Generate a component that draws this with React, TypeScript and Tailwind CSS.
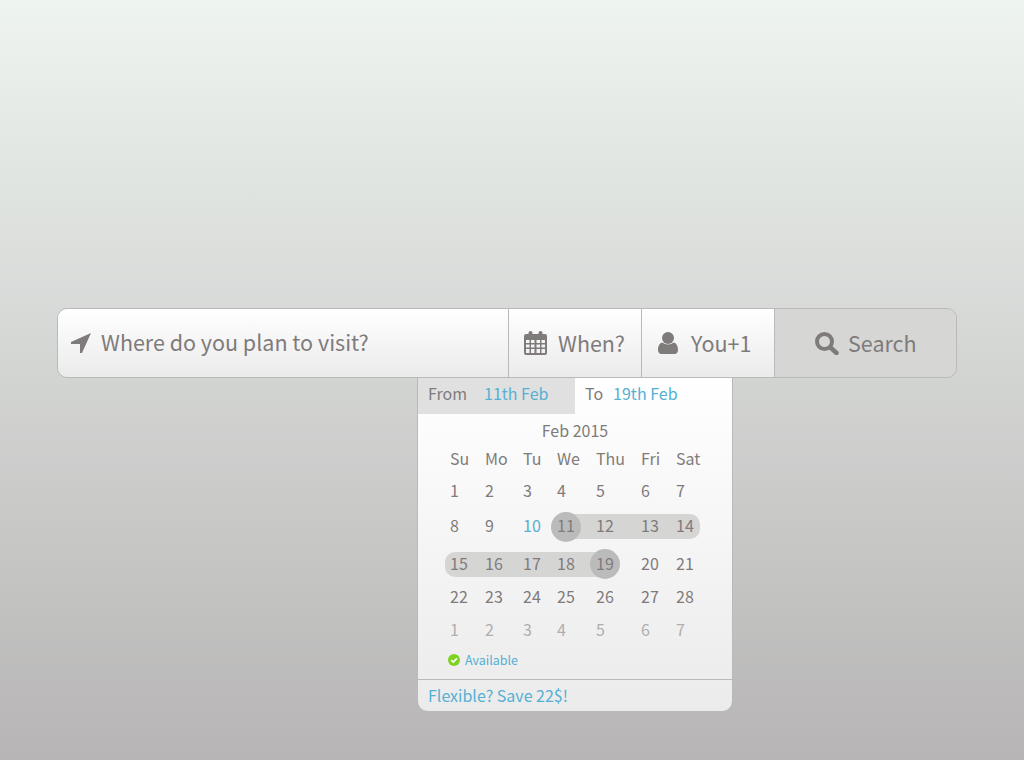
const font = "font-['Noto_Sans_CJK_SC','Noto_Sans',sans-serif]";
const cols = "grid grid-cols-[35px_38px_34px_39px_45px_35px_40px]";

type Week = { days: number[]; height: string; muted?: boolean };

const weeks: Week[] = [
  { days: [1, 2, 3, 4, 5, 6, 7], height: "h-[32px]" },
  { days: [8, 9, 10, 11, 12, 13, 14], height: "h-[38px]" },
  { days: [15, 16, 17, 18, 19, 20, 21], height: "h-[38px]" },
  { days: [22, 23, 24, 25, 26, 27, 28], height: "h-[28px]" },
  { days: [1, 2, 3, 4, 5, 6, 7], height: "h-[38px]", muted: true },
];

function ArrowIcon() {
  return (
    <svg viewBox="0 0 20 20" className="size-[20px] shrink-0 fill-[#7f7b7b]">
      <path d="M20 0 L0 9 V11 H9 V20 H11 Z" />
    </svg>
  );
}

function CalendarIcon() {
  return (
    <svg viewBox="0 0 23 24" className="h-[24px] w-[23px] shrink-0 text-[#7f7b7b]">
      <path
        fill="currentColor"
        fillRule="evenodd"
        d="M2 3h2.5V2a2 2 0 0 1 4 0v1h6V2a2 2 0 0 1 4 0v1H21a2 2 0 0 1 2 2v17a2 2 0 0 1-2 2H2a2 2 0 0 1-2-2V5a2 2 0 0 1 2-2Z
           M2 9v3h3.5V9Z M7 9v3h3.5V9Z M12.5 9v3H16V9Z M17.5 9v3H21V9Z
           M2 13.5v3h3.5v-3Z M7 13.5v3h3.5v-3Z M12.5 13.5v3H16v-3Z M17.5 13.5v3H21v-3Z
           M2 18v4h3.5v-4Z M7 18v4h3.5v-4Z M12.5 18v4H16v-4Z M17.5 18v4H21v-4Z"
      />
    </svg>
  );
}

function UserIcon() {
  return (
    <svg viewBox="0 0 20 22" className="h-[22px] w-[20px] shrink-0 fill-[#7f7b7b]">
      <circle cx="10" cy="6" r="6" />
      <path d="M4.5 10.5 C7 13 13 13 15.5 10.5 C18.5 11 20 14 20 18 C20 20.5 18.5 22 16.5 22 H3.5 C1.5 22 0 20.5 0 18 C0 14 1.5 11 4.5 10.5 Z" />
    </svg>
  );
}

function SearchIcon() {
  return (
    <svg viewBox="0 0 24 23" className="h-[23px] w-[24px] shrink-0 fill-none stroke-[#7f7b7b]">
      <circle cx="9.5" cy="9.5" r="7.5" strokeWidth="4" />
      <path d="M15.5 15.5 L21.5 21" strokeWidth="4.5" strokeLinecap="round" />
    </svg>
  );
}

function WeekRow({ week }: { week: Week }) {
  return (
    <div className={`relative ${cols} ${week.height} items-center`}>
      {/* selected range */}
      {week.days[0] === 8 && (
        <>
          <div className="absolute left-[121px] top-[8px] h-[25px] w-[134px] rounded-r-[10px] bg-[#d5d5d4]" />
          <div className="absolute left-[106px] top-[6px] h-[30px] w-[30px] rounded-full bg-[#bcbbbb]" />
        </>
      )}
      {week.days[0] === 15 && (
        <>
          <div className="absolute left-0 top-[8px] h-[25px] w-[160px] rounded-l-[10px] bg-[#d5d5d4]" />
          <div className="absolute left-[145px] top-[5px] h-[30px] w-[30px] rounded-full bg-[#bcbbbb]" />
        </>
      )}
      {week.days.map((d) => (
        <span
          key={d}
          className={`relative pl-[5px] ${week.muted ? "text-[#b0aeae]" : d === 10 ? "text-[#55b0d3]" : "text-[#7f7b7b]"}`}
        >
          {d}
        </span>
      ))}
    </div>
  );
}

export default function App() {
  return (
    <div className={`${font} h-[760px] overflow-hidden bg-gradient-to-b from-[#eef4f0] to-[#b7b5b5] pt-[308px] pl-[57px]`}>
      {/* search bar */}
      <div className="flex h-[70px] w-[900px] rounded-[10px] border border-[#b9b9b9] text-[21.5px] leading-[28px] text-[#7f7b7b]">
        <div className="flex w-[450px] items-center gap-[10px] rounded-l-[9px] bg-gradient-to-b from-white to-[#ebebeb] pl-[13px]">
          <ArrowIcon />
          <span className="mb-[2px]">Where do you plan to visit?</span>
        </div>
        <div className="flex w-[133px] items-center gap-[11px] border-l border-[#b9b9b9] bg-gradient-to-b from-white to-[#ebebeb] pl-[15px]">
          <CalendarIcon />
          <span>When?</span>
        </div>
        <div className="flex w-[133px] items-center gap-[13px] border-l border-[#b9b9b9] bg-gradient-to-b from-white to-[#ebebeb] pl-[16px]">
          <UserIcon />
          <span>You+1</span>
        </div>
        <div className="flex flex-1 items-center gap-[9px] rounded-r-[9px] border-l border-[#b9b9b9] bg-[#d6d6d5] pl-[40px]">
          <SearchIcon />
          <span>Search</span>
        </div>
      </div>

      {/* date picker */}
      <div className="ml-[360px] w-[316px] rounded-b-[10px] border-x border-[#b9b9b9] bg-gradient-to-b from-white to-[#ebebeb] text-[16px] leading-[22px]">
        <div className="flex h-[36px] items-center">
          <div className="flex h-full w-[157px] items-center gap-[17px] bg-[#e0e0e0] pb-[7px] pl-[10px] text-[#7f7b7b]">
            <span>From</span>
            <span className="text-[#55b0d3]">11th Feb</span>
          </div>
          <div className="flex items-center gap-[10px] pb-[7px] pl-[10px] text-[#7f7b7b]">
            <span>To</span>
            <span className="text-[#55b0d3]">19th Feb</span>
          </div>
        </div>

        <div className="mt-[5px] text-center text-[#7f7b7b]">Feb 2015</div>

        <div className="pl-[27px] text-[#7f7b7b]">
          <div className={`${cols} mt-[5px] mb-[4px] h-[24px] items-center`}>
            {["Su", "Mo", "Tu", "We", "Thu", "Fri", "Sat"].map((d) => (
              <span key={d} className="pl-[5px]">
                {d}
              </span>
            ))}
          </div>
          {weeks.map((w) => (
            <WeekRow key={w.days[0] + (w.muted ? "m" : "")} week={w} />
          ))}
        </div>

        <div className="flex h-[31px] items-center gap-[5px] pb-[8px] pl-[30px] text-[12.5px] text-[#55b0d3]">
          <svg viewBox="0 0 12 12" className="size-[12px] shrink-0">
            <circle cx="6" cy="6" r="6" fill="#7ed321" />
            <path d="M3.2 6.2 L5.2 8.1 L8.9 4.3" fill="none" stroke="#fff" strokeWidth="1.7" />
          </svg>
          <span>Available</span>
        </div>

        <div className="flex h-[32px] items-center border-t border-[#b9b9b9] pb-[2px] pl-[10px] text-[#55b0d3]">
          Flexible? Save 22$!
        </div>
      </div>
    </div>
  );
}
